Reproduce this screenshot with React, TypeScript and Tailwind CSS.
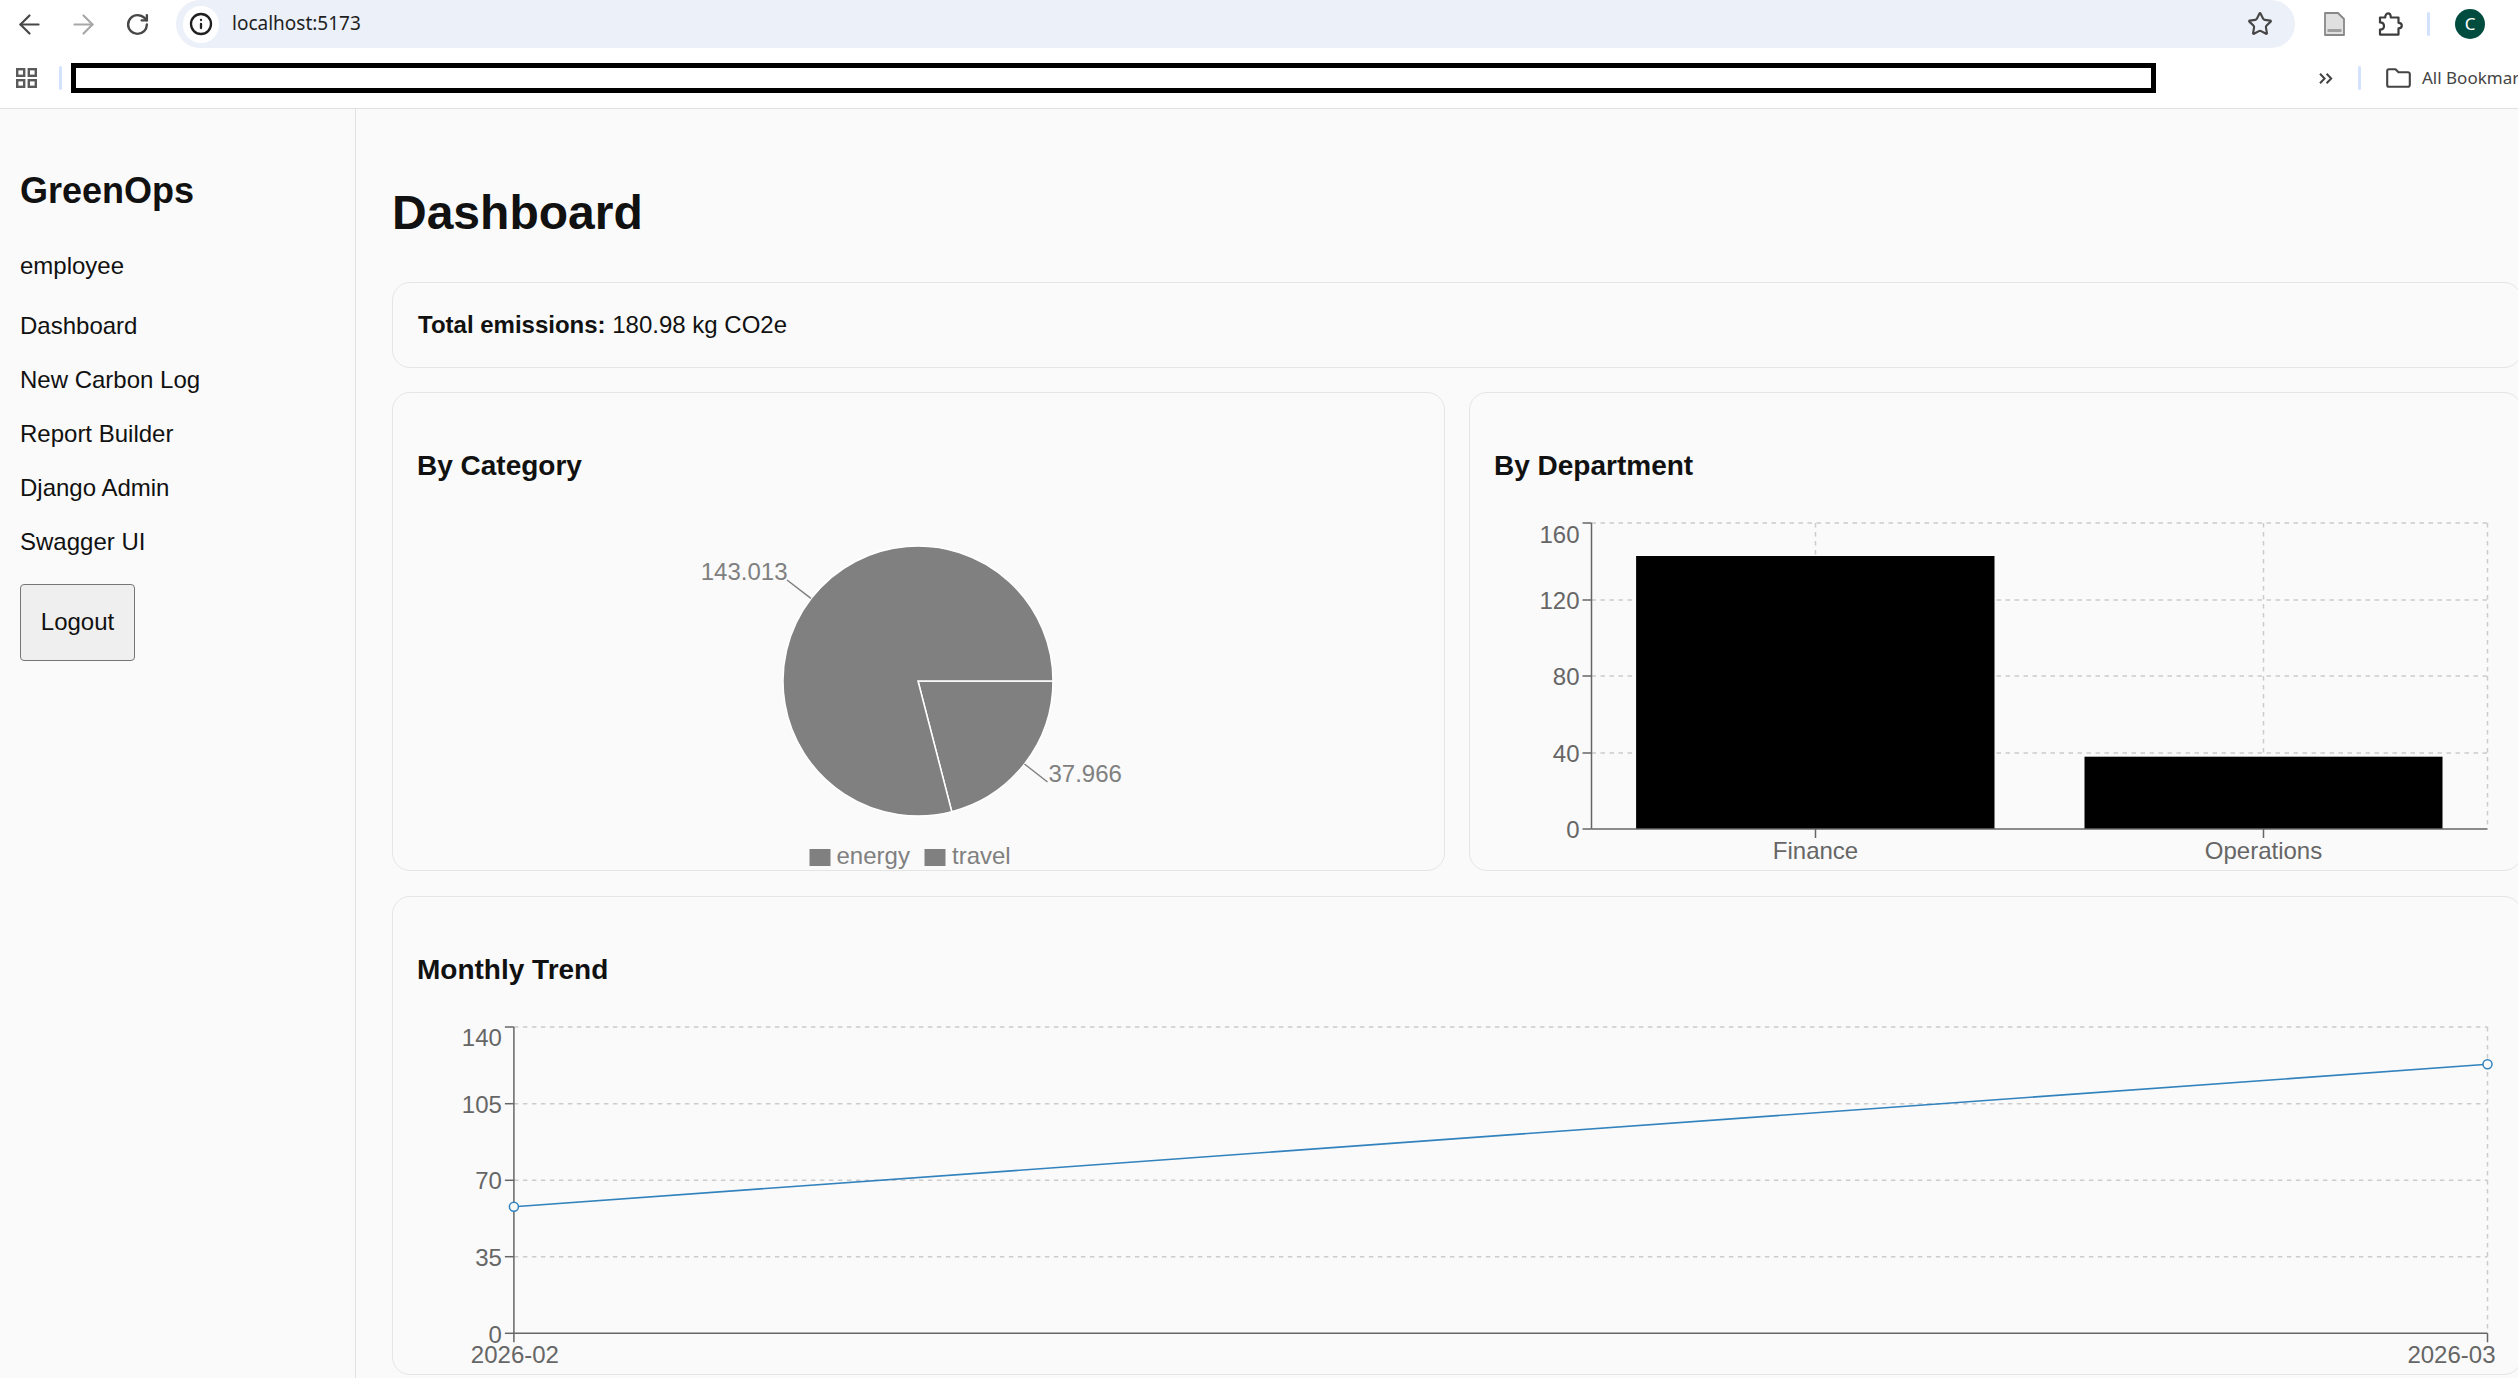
import { ArrowLeft, ArrowRight, Info, RotateCw, Star } from "lucide-react";

const navItems = ["Dashboard", "New Carbon Log", "Report Builder", "Django Admin", "Swagger UI"];

const axisColor = "#666666";
const gridColor = "#cccccc";

function GridIcon() {
  return (
    <svg width="21" height="20" viewBox="0 0 21 20" fill="none" stroke="#5a5a5a" strokeWidth="2.4">
      <rect x="1.2" y="1.2" width="7" height="6.6" />
      <rect x="12.8" y="1.2" width="7" height="6.6" />
      <rect x="1.2" y="12.2" width="7" height="6.6" />
      <rect x="12.8" y="12.2" width="7" height="6.6" />
    </svg>
  );
}

function DocIcon() {
  return (
    <svg width="21" height="24" viewBox="0 0 21 24">
      <path d="M1 1H14L20 7V23H1Z" fill="#e0e0e0" stroke="#888888" strokeWidth="1.8" strokeLinejoin="round" />
      <rect x="3.5" y="17" width="14" height="3" fill="#a0a0a0" />
    </svg>
  );
}

function PuzzleIcon() {
  return (
    <svg width="25" height="24" viewBox="0 0 25 24" fill="none" stroke="#3c3c3c" strokeWidth="2.2" strokeLinejoin="round">
      <path d="M2 5.5H7.2C7.2 3 8.4 1.4 10 1.4S12.8 3 12.8 5.5H20.5V10.8C22.6 10.8 23.8 12 23.8 13.6S22.6 16.4 20.5 16.4V22.6H2V17.6C4.6 17.6 6 16 6 14S4.6 10.4 2 10.4Z" />
    </svg>
  );
}

function ChevronsIcon() {
  return (
    <svg width="14" height="11" viewBox="0 0 14 11" fill="none" stroke="#444444" strokeWidth="2">
      <path d="M1 .8 5.6 5.5 1 10.2M7.6 .8 12.2 5.5 7.6 10.2" />
    </svg>
  );
}

function FolderIcon() {
  return (
    <svg width="25" height="20" viewBox="0 0 25 20" fill="none" stroke="#444444" strokeWidth="2.1" strokeLinejoin="round">
      <path d="M1.2 3A1.8 1.8 0 0 1 3 1.2H9.5L12.5 4.2H22A1.8 1.8 0 0 1 23.8 6V17A1.8 1.8 0 0 1 22 18.8H3A1.8 1.8 0 0 1 1.2 17Z" />
    </svg>
  );
}

function BrowserBar() {
  return (
    <header className="h-[109px] border-b border-[#e0e0e0] bg-white font-['Noto_Sans',sans-serif]">
      <div className="flex h-[48px] items-center pl-[13.5px]">
        <ArrowLeft size={31} strokeWidth={1.7} color="#474747" className="shrink-0" />
        <ArrowRight size={31} strokeWidth={1.7} color="#a8a8a8" className="ml-[23px] shrink-0" />
        <RotateCw size={25} strokeWidth={2.3} color="#474747" className="ml-[26px] shrink-0" />
        <div className="ml-[26.5px] flex h-[48px] w-[2119px] shrink-0 items-center rounded-full bg-[#ebf0f9] pl-[7px] pr-[22px]">
          <div className="flex h-[37px] w-[36px] items-center justify-center rounded-full bg-white">
            <Info size={24} strokeWidth={2.3} color="#1f1f1f" />
          </div>
          <span className="ml-[13px] pb-[2px] text-[19px] text-[#1f1f1f]">localhost:5173</span>
          <Star size={26} strokeWidth={2} color="#474747" className="ml-auto" />
        </div>
        <div className="ml-[29px] shrink-0">
          <DocIcon />
        </div>
        <div className="ml-[33px] shrink-0">
          <PuzzleIcon />
        </div>
        <div className="ml-[24px] h-[24px] w-[3px] shrink-0 rounded-full bg-[#d3e3fd]" />
        <div className="ml-[25px] flex h-[30px] w-[30px] shrink-0 items-center justify-center rounded-full bg-[#004d40] text-[17px] text-white">
          C
        </div>
      </div>
      <div className="flex h-[60px] items-center overflow-hidden pl-[16px]">
        <div className="shrink-0">
          <GridIcon />
        </div>
        <div className="ml-[22px] h-[24px] w-[3px] shrink-0 rounded-full bg-[#d3e3fd]" />
        <div className="ml-[9px] h-[30px] w-[2085px] shrink-0 border-[5px] border-black bg-white" />
        <div className="ml-[163px] shrink-0">
          <ChevronsIcon />
        </div>
        <div className="ml-[25px] h-[24px] w-[3px] shrink-0 rounded-full bg-[#d3e3fd]" />
        <div className="ml-[25px] shrink-0">
          <FolderIcon />
        </div>
        <span className="ml-[11px] shrink-0 whitespace-nowrap text-[17px] text-[#444444]">All Bookmarks</span>
      </div>
    </header>
  );
}

function Sidebar() {
  return (
    <aside className="w-[356px] shrink-0 border-r border-[#e2e2e2] pl-[20px] pt-[60.5px]">
      <h2 className="text-[36px] font-bold leading-[42px]">GreenOps</h2>
      <p className="mt-[40px] text-[24px] leading-[28px]">employee</p>
      <nav className="mt-[32px] flex flex-col gap-[26px]">
        {navItems.map((item) => (
          <a key={item} href="#" className="text-[24px] leading-[28px]">
            {item}
          </a>
        ))}
      </nav>
      <button className="mt-[28px] h-[77px] w-[115px] rounded-[4px] border-[1.5px] border-[#767676] bg-[#efefef] text-[24px]">
        Logout
      </button>
    </aside>
  );
}

function Card({ title, children }: { title: string; children: React.ReactNode }) {
  return (
    <section className="h-[479px] rounded-[18px] border-[1.5px] border-[#e5e5e5] px-6 pt-[56.5px]">
      <h3 className="text-[28px] font-bold leading-[32px]">{title}</h3>
      <div className="mt-[35px]">{children}</div>
    </section>
  );
}

function PieChart() {
  return (
    <svg viewBox="417.5 517 1002 354" className="block h-[354px] w-[1002px]" fontSize="24" fill="#808080">
      <path d="M918.5 681 1053.5 681A135 135 0 0 1 952.3 811.7Z" stroke="#ffffff" strokeWidth="1.5" />
      <path d="M918.5 681 952.3 811.7A135 135 0 1 1 1053.5 681Z" stroke="#ffffff" strokeWidth="1.5" />
      <path d="M811.4 598.3 787.5 580M1025 764 1048 782" stroke="#808080" strokeWidth="1.5" fill="none" />
      <text x="788" y="580" textAnchor="end">143.013</text>
      <text x="1049" y="781.6">37.966</text>
      <rect x="810" y="849" width="21" height="17" />
      <text x="837" y="864">energy</text>
      <rect x="925" y="849" width="21" height="17" />
      <text x="952.5" y="864">travel</text>
    </svg>
  );
}

function BarChart() {
  const left = 1592;
  const right = 2488;
  const top = 523;
  const bottom = 829;
  const yTicks = [
    { label: "160", y: 523, textY: 542.6 },
    { label: "120", y: 600, textY: 608.6 },
    { label: "80", y: 676, textY: 684.6 },
    { label: "40", y: 753, textY: 762 },
    { label: "0", y: 829, textY: 837.6 },
  ];
  const xTicks = [
    { label: "Finance", x: 1816 },
    { label: "Operations", x: 2264 },
  ];

  return (
    <svg viewBox="1494.5 517 1002 354" className="block h-[354px] w-[1002px]" fontSize="24" fill={axisColor}>
      <g stroke={gridColor} strokeWidth="1.5" strokeDasharray="4.5 4.5" fill="none">
        {yTicks.slice(0, 4).map((t) => (
          <line key={t.label} x1={left} x2={right} y1={t.y} y2={t.y} />
        ))}
        {[1816, 2264, 2488].map((x) => (
          <line key={x} x1={x} x2={x} y1={top} y2={bottom} />
        ))}
      </g>
      <rect x="1636.6" y="556" width="358.4" height="273" fill="#000000" />
      <rect x="2085" y="756.7" width="358" height="72.3" fill="#000000" />
      <g stroke={axisColor} strokeWidth="1.5">
        <line x1={left} x2={left} y1={top} y2={bottom} />
        <line x1={left} x2={right} y1={bottom} y2={bottom} />
        {yTicks.map((t) => (
          <line key={t.label} x1={left - 9} x2={left} y1={t.y} y2={t.y} />
        ))}
        {xTicks.map((t) => (
          <line key={t.label} x1={t.x} x2={t.x} y1={bottom} y2={bottom + 9} />
        ))}
      </g>
      {yTicks.map((t) => (
        <text key={t.label} x={left - 12} y={t.textY} textAnchor="end">
          {t.label}
        </text>
      ))}
      {xTicks.map((t) => (
        <text key={t.label} x={t.x} y="859" textAnchor="middle">
          {t.label}
        </text>
      ))}
    </svg>
  );
}

function LineChart() {
  const left = 514.4;
  const right = 2488;
  const top = 1027;
  const bottom = 1333.3;
  const yTicks = [
    { label: "140", y: 1027, textY: 1046 },
    { label: "105", y: 1103.7, textY: 1112.6 },
    { label: "70", y: 1180.3, textY: 1189 },
    { label: "35", y: 1256.7, textY: 1266 },
    { label: "0", y: 1333.3, textY: 1342.6 },
  ];

  return (
    <svg viewBox="417.5 1021 2079 354" className="block h-[354px] w-[2079px]" fontSize="24" fill={axisColor}>
      <g stroke={gridColor} strokeWidth="1.5" strokeDasharray="4.5 4.5" fill="none">
        {yTicks.slice(0, 4).map((t) => (
          <line key={t.label} x1={left} x2={right} y1={t.y} y2={t.y} />
        ))}
        <line x1={right} x2={right} y1={top} y2={bottom} />
      </g>
      <g stroke={axisColor} strokeWidth="1.5">
        <line x1={left} x2={left} y1={top} y2={bottom + 9} />
        <line x1={left} x2={right} y1={bottom} y2={bottom} />
        <line x1={right} x2={right} y1={bottom} y2={bottom + 9} />
        {yTicks.map((t) => (
          <line key={t.label} x1={left - 9} x2={left} y1={t.y} y2={t.y} />
        ))}
      </g>
      {yTicks.map((t) => (
        <text key={t.label} x={left - 12} y={t.textY} textAnchor="end">
          {t.label}
        </text>
      ))}
      <text x={left + 1} y="1362.6" textAnchor="middle">2026-02</text>
      <text x="2496" y="1362.6" textAnchor="end">2026-03</text>
      <line x1={left} y1="1206.7" x2={right} y2="1064.3" stroke="#3182bd" strokeWidth="1.6" />
      <circle cx={left} cy="1206.7" r="4.5" fill="#fafafa" stroke="#3182bd" strokeWidth="1.5" />
      <circle cx={right} cy="1064.3" r="4.5" fill="#fafafa" stroke="#3182bd" strokeWidth="1.5" />
    </svg>
  );
}

export default function App() {
  return (
    <div className="h-[1378px] overflow-hidden bg-[#fafafa] font-['Liberation_Sans',Arial,sans-serif] text-[#111111]">
      <BrowserBar />
      <div className="flex h-[1269px]">
        <Sidebar />
        <main className="min-w-0 flex-1 overflow-hidden pl-[36px] pt-[76px]">
          <div className="w-[2130px]">
            <h1 className="text-[48px] font-bold leading-[56px]">Dashboard</h1>
            <div className="mt-[41px] flex h-[85.5px] items-center rounded-[18px] border-[1.5px] border-[#e5e5e5] px-[25px] text-[24px]">
              <p>
                <strong>Total emissions:</strong> 180.98 kg CO2e
              </p>
            </div>
            <div className="mt-[24.5px] grid grid-cols-2 gap-6">
              <Card title="By Category">
                <PieChart />
              </Card>
              <Card title="By Department">
                <BarChart />
              </Card>
            </div>
            <div className="mt-[25px]">
              <Card title="Monthly Trend">
                <LineChart />
              </Card>
            </div>
          </div>
        </main>
      </div>
    </div>
  );
}
